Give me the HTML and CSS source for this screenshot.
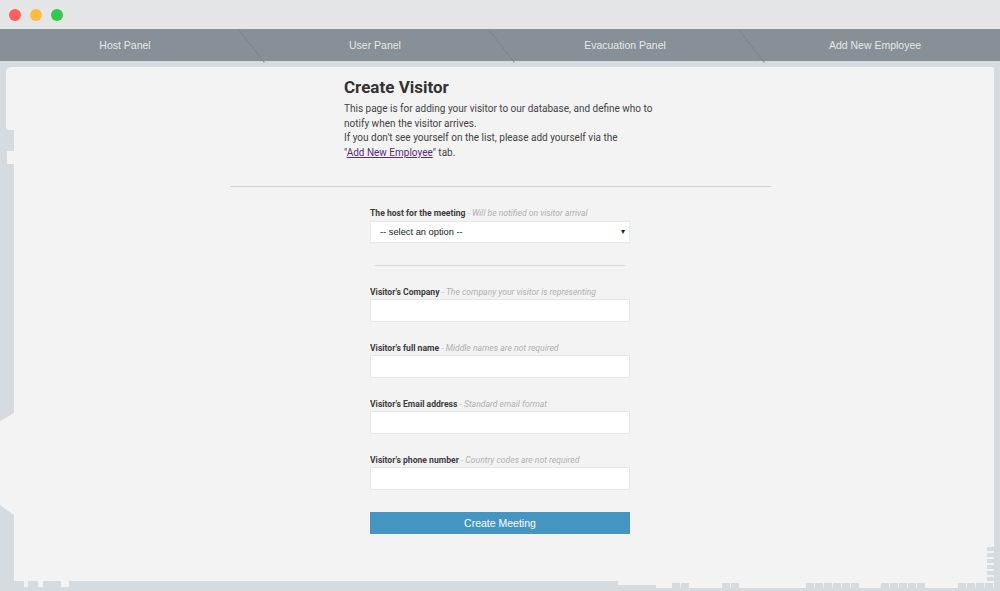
FILE: index.html
```html
<!DOCTYPE html>
<html>
<head>
<meta charset="utf-8">
<link rel="stylesheet" href="styles.css">
</head>
<body>
<div class="window">
  <div class="titlebar">
    <span class="dot red"></span>
    <span class="dot yellow"></span>
    <span class="dot green"></span>
  </div>
  <nav class="nav">
    <a class="tab">Host Panel</a>
    <a class="tab">User Panel</a>
    <a class="tab">Evacuation Panel</a>
    <a class="tab">Add New Employee</a>
  </nav>
  <div class="stage">
    <div class="panel">
      <span class="ear"></span>
      <span class="notch"></span>
      <span class="bump"></span>
      <section class="intro">
        <h1 class="title">Create Visitor</h1>
        <p class="desc">This page is for adding your visitor to our database, and define who to<br>notify when the visitor arrives.<br>If you don't see yourself on the list, please add yourself via the<br>"<a class="link" href="#">Add New Employee</a>" tab.</p>
      </section>
      <hr class="rule-wide">
      <form class="form">
        <div class="field">
          <label class="label"><b>The host for the meeting</b> <i class="hint">- Will be notified on visitor arrival</i></label>
          <div class="select"><span>-- select an option --</span><span class="caret">▾</span></div>
        </div>
        <hr class="rule-narrow">
        <div class="field">
          <label class="label"><b>Visitor's Company</b> <i class="hint">- The company your visitor is representing</i></label>
          <div class="input"></div>
        </div>
        <div class="field">
          <label class="label"><b>Visitor's full name</b> <i class="hint">- Middle names are not required</i></label>
          <div class="input"></div>
        </div>
        <div class="field">
          <label class="label"><b>Visitor's Email address</b> <i class="hint">- Standard email format</i></label>
          <div class="input"></div>
        </div>
        <div class="field">
          <label class="label"><b>Visitor's phone number</b> <i class="hint">- Country codes are not required</i></label>
          <div class="input"></div>
        </div>
        <div class="button">Create Meeting</div>
      </form>
    </div>
    <div class="ladder">
      <span></span><span></span><span></span><span></span><span></span><span></span>
    </div>
    <div class="footer-strip">
      <span class="holes">
        <i class="hole h1"></i><i class="hole h2"></i><i class="hole h3"></i>
      </span>
      <span class="ledge"></span>
      <span class="blocks">
        <i class="gap" style="width:16px"></i>
        <i class="blk"></i><i class="blk"></i>
        <i class="gap" style="width:32px"></i>
        <i class="blk"></i><i class="blk"></i>
        <i class="gap" style="width:66px"></i>
        <i class="blk"></i><i class="blk"></i><i class="blk"></i><i class="blk"></i><i class="blk"></i><i class="blk"></i>
        <i class="gap" style="width:21px"></i>
        <i class="blk"></i><i class="blk"></i><i class="blk"></i><i class="blk"></i><i class="blk"></i>
        <i class="gap" style="width:32px"></i>
        <i class="blk"></i><i class="blk"></i><i class="blk"></i><i class="blk"></i>
      </span>
    </div>
  </div>
</div>
</body>
</html>
```
FILE: styles.css
```css
* { box-sizing: border-box; }
html, body { margin: 0; padding: 0; }
body {
  width: 1000px;
  height: 591px;
  overflow: hidden;
  background: #d5dbde;
  font-family: Roboto, "Liberation Sans", Arial, sans-serif;
}
.window { width: 1000px; height: 591px; display: flex; flex-direction: column; }

.titlebar {
  height: 29px;
  background: #e4e5e7;
  display: flex;
  align-items: center;
  padding-left: 9px;
  gap: 9px;
  flex: none;
}
.dot { width: 12px; height: 12px; border-radius: 50%; display: block; }
.red { background: #fc605b; }
.yellow { background: #fdbc40; }
.green { background: #34c84a; }

.nav {
  height: 32px;
  background: #879096;
  display: flex;
  flex: none;
}
.tab {
  position: relative;
  width: 250px;
  display: flex;
  align-items: center;
  justify-content: center;
  color: #e6e8ea;
  font-family: "Liberation Sans", Arial, sans-serif;
  font-size: 10.5px;
  padding-bottom: 1px;
}
.tab::after {
  content: "";
  position: absolute;
  right: -2px;
  top: -4px;
  width: 1px;
  height: 42px;
  background: #7c858b;
  transform: rotate(-38deg);
}
.tab:last-child::after { right: -14px; }

.stage {
  position: relative;
  flex: 1;
  padding: 6px 6px 10px 14px;
  display: flex;
}
.panel {
  position: relative;
  flex: 1;
  background: #f3f3f3;
  display: flex;
  flex-direction: column;
  align-items: center;
  padding-top: 8px;
  padding-right: 8px;
  border-top-right-radius: 2px;
}
.ear {
  position: absolute;
  left: -8px;
  top: 0;
  width: 12px;
  height: 63px;
  background: #f3f3f3;
  border-top-left-radius: 5px;
  border-bottom-left-radius: 3px;
}
.notch {
  position: absolute;
  left: -7px;
  top: 84px;
  width: 8px;
  height: 13px;
  background: #f3f3f3;
}
.bump {
  position: absolute;
  left: -14px;
  top: 346px;
  width: 14px;
  height: 102px;
  background: #f3f3f3;
  clip-path: polygon(100% 0, 0 8px, 0 calc(100% - 10px), 100% 100%);
}

.intro { width: 312px; color: #333; }
.title {
  margin: 0 0 3px;
  font-size: 17px;
  font-weight: 700;
  color: #333;
  line-height: 24px;
}
.desc {
  margin: 0;
  font-size: 10px;
  line-height: 14.7px;
  color: #444;
  white-space: nowrap;
}
.link { color: #5b2a86; text-decoration: underline; }

.rule-wide {
  width: 541px;
  border: 0;
  border-top: 1px solid #d2d2d2;
  margin: 25px 0 0;
}

.form {
  width: 260px;
  display: flex;
  flex-direction: column;
  margin-top: 20px;
}
.field { display: flex; flex-direction: column; margin-bottom: 20px; }
.label {
  font-size: 8.6px;
  line-height: 12px;
  margin-bottom: 1px;
  color: #3c3c3c;
}
.label b { font-weight: 700; }
.hint { color: #b0b0b0; font-weight: 400; }

.select {
  margin-top: 1px;
  height: 22px;
  background: #fff;
  border: 1px solid #e8e8e8;
  display: flex;
  align-items: center;
  justify-content: space-between;
  padding: 0 4px 0 9px;
  font-family: "Liberation Sans", Arial, sans-serif;
  font-size: 9.3px;
  color: #222;
}
.caret { font-size: 8px; color: #222; }

.rule-narrow {
  width: 250px;
  align-self: center;
  border: 0;
  border-top: 1px solid #d8d8d8;
  margin: 2px 0 20px;
}

.input {
  height: 23px;
  background: #fff;
  border: 1px solid #e6e6e6;
}

.button {
  margin-top: 2px;
  height: 22px;
  background: #4595c3;
  color: #fff;
  display: flex;
  align-items: center;
  justify-content: center;
  font-family: "Liberation Sans", Arial, sans-serif;
  font-size: 10.5px;
}

.ladder {
  position: absolute;
  right: 6px;
  bottom: 10px;
  width: 7px;
  display: flex;
  flex-direction: column;
  gap: 2px;
}
.ladder span { display: block; height: 4px; background: #d5dbde; }

.footer-strip {
  position: absolute;
  left: 0;
  right: 6px;
  bottom: 0;
  height: 10px;
  display: flex;
  align-items: flex-start;
}
.holes { display: flex; padding-left: 24px; height: 7px; }
.hole { display: block; background: #f3f3f3; height: 6px; }
.h1 { width: 4px; }
.h2 { width: 5px; margin-left: 10px; }
.h3 { width: 8px; margin-left: 18px; }
.ledge { margin-left: auto; width: 38px; height: 4px; background: #f3f3f3; }
.blocks {
  display: flex;
  width: 338px;
  height: 7px;
  background: #f3f3f3;
  align-items: flex-start;
}
.blk { display: block; flex: none; width: 8px; height: 8px; background: #d5dbde; margin-top: 2px; margin-right: 1px; }
.gap { display: block; flex: none; }
```
